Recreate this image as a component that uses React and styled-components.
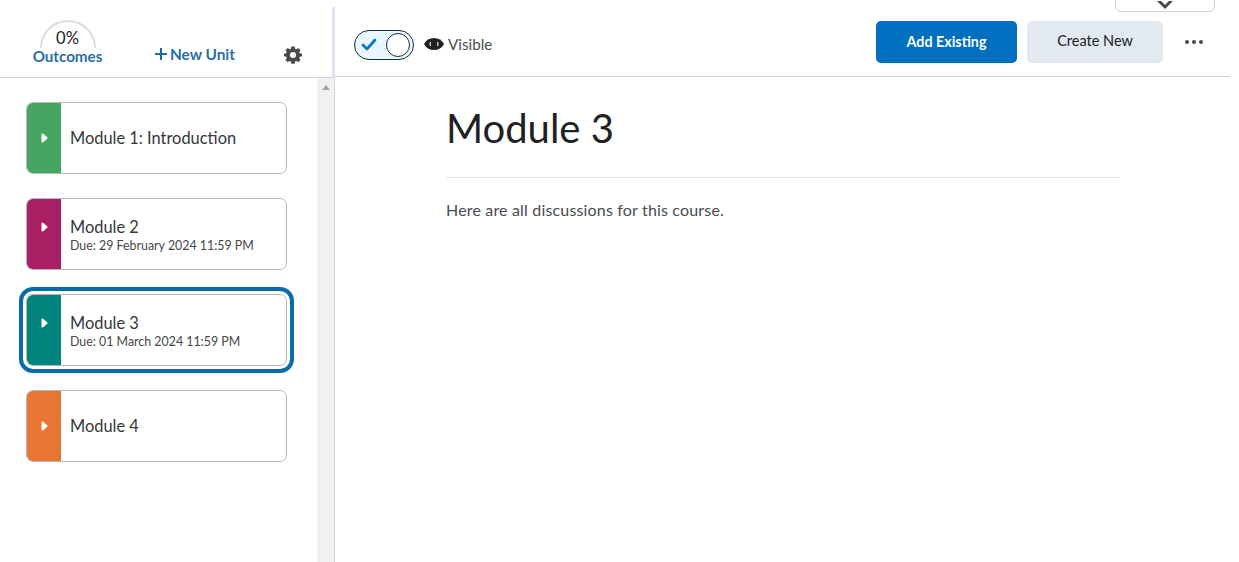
import React from 'react';
import styled, { createGlobalStyle } from 'styled-components';

const GlobalStyle = createGlobalStyle`
  html, body { margin: 0; padding: 0; background: #fff; }
  body { font-family: Lato, "Liberation Sans", sans-serif; color: #202122; overflow: hidden; }
`;

const modules = [
  { id: 1, title: 'Module 1: Introduction', color: '#46a661' },
  { id: 2, title: 'Module 2', due: 'Due: 29 February 2024 11:59 PM', color: '#a81f63' },
  { id: 3, title: 'Module 3', due: 'Due: 01 March 2024 11:59 PM', color: '#02837c', selected: true },
  { id: 4, title: 'Module 4', color: '#e87532' },
];

function Gear() {
  return (
    <svg width="18" height="18" viewBox="0 0 20 20">
      <path
        fill="#494c4e"
        fillRule="evenodd"
        d="M8 0h4l.6 2.700 1.500.6 2.300-1.500 2.800 2.800-1.500 2.300.6 1.500L21 9v3l-2.700.6-.6 1.500 1.500 2.300-2.800 2.800-2.300-1.500-1.500.6L12 21H8l-.6-2.700-1.500-.6-2.300 1.500-2.800-2.800 1.500-2.300-.6-1.500L-1 12V9l2.700-.6.6-1.500-1.500-2.300 2.800-2.800 2.300 1.500 1.500-.6zM10 6.800a3.700 3.700 0 1 0 0 7.400 3.700 3.700 0 0 0 0-7.400z"
        transform="translate(.9 .5) scale(.91)"
      />
    </svg>
  );
}

function Eye() {
  return (
    <svg width="20" height="14" viewBox="0 0 20 14">
      <path d="M0 7C2 3 5.500 1 10 1s8 2 10 6c-2 4-5.500 6-10 6S2 11 0 7z" fill="#202122" />
      <path d="M6.500 9a4 4 0 0 1 0-4M13.500 5a4 4 0 0 1 0 4" fill="none" stroke="#fff" strokeWidth="1.100" />
    </svg>
  );
}

function App() {
  return (
    <Page>
      <GlobalStyle />
      <TopTab>
        <svg width="16" height="9" viewBox="0 0 16 9">
          <path d="M2 0l6 6 6-6" fill="none" stroke="#494c4e" strokeWidth="3" strokeLinecap="round" />
        </svg>
      </TopTab>
      <Sidebar>
        <SideHeader>
          <Outcomes>
            <Gauge>
              <svg width="58" height="30" viewBox="0 0 58 30">
                <path d="M2 29a27 27 0 0 1 54 0" fill="none" stroke="#d9dcdf" strokeWidth="2" />
              </svg>
              <GaugeValue>0%</GaugeValue>
            </Gauge>
            <SideLink>Outcomes</SideLink>
          </Outcomes>
          <NewUnit>
            <svg width="12" height="12" viewBox="0 0 12 12">
              <path d="M6 0v12M0 6h12" stroke="#1e6aa5" strokeWidth="2" />
            </svg>
            New Unit
          </NewUnit>
          <GearSlot><Gear /></GearSlot>
        </SideHeader>
        <SideBody>
          <CardList>
            {modules.map((m) => (
              <Card key={m.id} $selected={m.selected}>
                <Swatch $color={m.color} $hasDue={Boolean(m.due)}>
                  <svg width="7" height="10" viewBox="0 0 7 10">
                    <path d="M1.500 1.500L5.500 5l-4 3.500z" fill="#fff" stroke="#fff" strokeWidth="2" strokeLinejoin="round" />
                  </svg>
                </Swatch>
                <CardText>
                  <CardTitle>{m.title}</CardTitle>
                  {m.due && <CardDue>{m.due}</CardDue>}
                </CardText>
              </Card>
            ))}
          </CardList>
          <Scrollbar>
            <ScrollArrow />
          </Scrollbar>
        </SideBody>
      </Sidebar>
      <Main>
        <Toolbar>
          <Toggle>
            <svg width="16" height="13" viewBox="0 0 16 13">
              <path d="M2 7l4 4 8-9" fill="none" stroke="#0f77b8" strokeWidth="2.800" strokeLinecap="round" strokeLinejoin="round" />
            </svg>
            <Knob />
          </Toggle>
          <VisibleLabel>
            <Eye />
            Visible
          </VisibleLabel>
          <Actions>
            <PrimaryButton>Add Existing</PrimaryButton>
            <SecondaryButton>Create New</SecondaryButton>
            <MoreDots><i /><i /><i /></MoreDots>
          </Actions>
        </Toolbar>
        <Content>
          <Heading>Module 3</Heading>
          <Rule />
          <Body>Here are all discussions for this course.</Body>
        </Content>
      </Main>
    </Page>
  );
}

export default App;

const Page = styled.div`
  position: relative;
  display: flex;
  width: 1239px;
  height: 562px;
  overflow: hidden;
  background: #fff;
`;

const TopTab = styled.div`
  position: absolute;
  top: -12px;
  left: 1115px;
  width: 100px;
  height: 24px;
  box-sizing: border-box;
  border: 1px solid #cdd5dc;
  border-radius: 6px;
  display: flex;
  align-items: flex-end;
  justify-content: center;
  padding-bottom: 1px;
`;

const Sidebar = styled.aside`
  width: 335px;
  flex: none;
  display: flex;
  flex-direction: column;
`;

const SideHeader = styled.div`
  height: 78px;
  box-sizing: border-box;
  border-bottom: 1px solid #cdd5dc;
  position: relative;
  display: flex;
  align-items: flex-end;
  padding: 0 0 12px 32px;

  &::after {
    content: '';
    position: absolute;
    right: 0;
    top: 7px;
    bottom: 0;
    width: 3px;
    background: #dfe5ee;
  }
`;

const Outcomes = styled.div`
  width: 71px;
  display: flex;
  flex-direction: column;
  align-items: center;
`;

const Gauge = styled.div`
  position: relative;
  width: 58px;
  height: 28px;
`;

const GaugeValue = styled.span`
  position: absolute;
  left: 0;
  right: 0;
  top: 9px;
  text-align: center;
  font-size: 16.500px;
  line-height: 20px;
  color: #202122;
`;

const SideLink = styled.span`
  font-size: 15.200px;
  font-weight: 700;
  line-height: 18px;
  color: #2a6ea4;
`;

const NewUnit = styled(SideLink)`
  display: flex;
  align-items: center;
  gap: 3px;
  margin-left: 52px;
  font-size: 15.400px;
  padding-bottom: 2px;
`;

const GearSlot = styled.div`
  margin-left: 49px;
  height: 18px;
  padding-bottom: 1px;
`;

const SideBody = styled.div`
  flex: 1;
  display: flex;
  border-right: 1px solid #cdd5dc;
`;

const CardList = styled.div`
  flex: 1;
  padding: 24px 30px 0 26px;
  display: flex;
  flex-direction: column;
  gap: 24px;
`;

const Card = styled.div`
  height: 72px;
  box-sizing: border-box;
  border: 1px solid #b4b8bc;
  border-radius: 7px;
  display: flex;
  outline: ${(p) => (p.$selected ? '4px solid #0b6aa8' : 'none')};
  outline-offset: 3px;
`;

const Swatch = styled.div`
  width: 34px;
  flex: none;
  border-radius: 6px 0 0 6px;
  background: ${(p) => p.$color};
  display: flex;
  align-items: center;
  justify-content: center;
  padding-bottom: ${(p) => (p.$hasDue ? '14px' : '0')};
  box-sizing: border-box;
`;

const CardText = styled.div`
  padding-left: 9px;
  display: flex;
  flex-direction: column;
  justify-content: center;
`;

const CardTitle = styled.div`
  font-size: 16.400px;
  line-height: 20px;
  padding-bottom: 1px;
  color: #35373a;
`;

const CardDue = styled.div`
  font-size: 12.400px;
  line-height: 16px;
  margin-bottom: -2px;
  color: #45484a;
`;

const Scrollbar = styled.div`
  width: 17px;
  flex: none;
  background: #f1f1f1;
  display: flex;
  justify-content: center;
  padding-top: 7px;
  box-sizing: border-box;
`;

const ScrollArrow = styled.div`
  width: 0;
  height: 0;
  border-left: 4px solid transparent;
  border-right: 4px solid transparent;
  border-bottom: 5px solid #a3a3a3;
`;

const Main = styled.main`
  flex: 1;
  margin-right: 9px;
  display: flex;
  flex-direction: column;
`;

const Toolbar = styled.div`
  height: 77px;
  box-sizing: border-box;
  border-bottom: 1px solid #cdd5dc;
  display: flex;
  align-items: center;
  padding: 7px 0 0 19px;
`;

const Toggle = styled.div`
  width: 60px;
  height: 30px;
  margin-top: 6px;
  box-sizing: border-box;
  border: 1px solid #1e2a33;
  border-radius: 15px;
  background: #e8f6ff;
  display: flex;
  align-items: center;
  justify-content: space-between;
  padding: 0 3px 0 6px;
`;

const Knob = styled.div`
  width: 22px;
  height: 22px;
  border: 1px solid #1e2a33;
  border-radius: 50%;
  background: #fff;
`;

const VisibleLabel = styled.div`
  display: flex;
  align-items: center;
  gap: 4px;
  margin: 4px 0 0 10px;
  font-size: 15.200px;
  color: #494c4e;
`;

const Actions = styled.div`
  margin-left: auto;
  display: flex;
  align-items: center;
`;

const PrimaryButton = styled.button`
  width: 141px;
  height: 42px;
  border: none;
  border-radius: 5px;
  background: #006fbf;
  color: #fff;
  font: 700 14.300px Lato, sans-serif;
`;

const SecondaryButton = styled(PrimaryButton)`
  width: 136px;
  margin-left: 10px;
  padding-bottom: 3px;
  background: #e3e9f1;
  color: #202122;
  font-weight: 400;
  font-size: 14.500px;
`;

const MoreDots = styled.div`
  display: flex;
  gap: 3px;
  margin: 0 27px 0 22px;

  i {
    width: 4px;
    height: 4px;
    border-radius: 50%;
    background: #494c4e;
  }
`;

const Content = styled.div`
  padding: 26px 110px 0 111px;
`;

const Heading = styled.h1`
  margin: 0;
  font-size: 40px;
  font-weight: 400;
  line-height: 50px;
  color: #202122;
`;

const Rule = styled.div`
  height: 1px;
  margin-top: 24px;
  background: #dfe3e7;
`;

const Body = styled.p`
  margin: 23px 0 0;
  font-size: 16px;
  letter-spacing: 0.17px;
  line-height: 18px;
  color: #494c4e;
`;
